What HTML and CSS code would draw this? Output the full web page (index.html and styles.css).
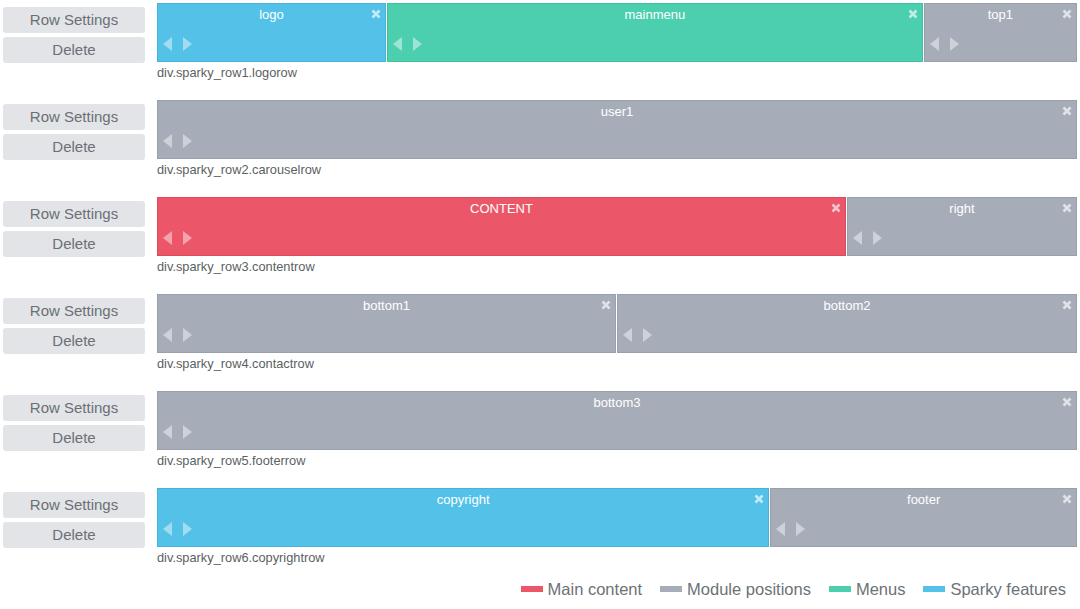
FILE: index.html
```html
<!DOCTYPE html>
<html>
    <head>
        <title>Layout Builder</title>
        <link rel="stylesheet" href="styles.css">
    </head>
    <body>
        <div class="layout">

            <div class="row">
                <div class="row-actions">
                    <div class="btn">Row Settings</div>
                    <div class="btn">Delete</div>
                </div>
                <div class="row-main">
                    <div class="positions">
                        <div class="pos feature span3">
                            <div class="pos-title">logo</div>
                            <svg class="close" viewBox="0 0 10 10"><path d="M1.5 1.5L8.5 8.5M8.5 1.5L1.5 8.5"/></svg>
                            <div class="arrows"><span class="arr-l"></span><span class="arr-r"></span></div>
                        </div>
                        <div class="pos menu span7">
                            <div class="pos-title">mainmenu</div>
                            <svg class="close" viewBox="0 0 10 10"><path d="M1.5 1.5L8.5 8.5M8.5 1.5L1.5 8.5"/></svg>
                            <div class="arrows"><span class="arr-l"></span><span class="arr-r"></span></div>
                        </div>
                        <div class="pos module span2">
                            <div class="pos-title">top1</div>
                            <svg class="close" viewBox="0 0 10 10"><path d="M1.5 1.5L8.5 8.5M8.5 1.5L1.5 8.5"/></svg>
                            <div class="arrows"><span class="arr-l"></span><span class="arr-r"></span></div>
                        </div>
                    </div>
                    <div class="row-name">div.sparky_row1.logorow</div>
                </div>
            </div>

            <div class="row">
                <div class="row-actions">
                    <div class="btn">Row Settings</div>
                    <div class="btn">Delete</div>
                </div>
                <div class="row-main">
                    <div class="positions">
                        <div class="pos module span12">
                            <div class="pos-title">user1</div>
                            <svg class="close" viewBox="0 0 10 10"><path d="M1.5 1.5L8.5 8.5M8.5 1.5L1.5 8.5"/></svg>
                            <div class="arrows"><span class="arr-l"></span><span class="arr-r"></span></div>
                        </div>
                    </div>
                    <div class="row-name">div.sparky_row2.carouselrow</div>
                </div>
            </div>

            <div class="row">
                <div class="row-actions">
                    <div class="btn">Row Settings</div>
                    <div class="btn">Delete</div>
                </div>
                <div class="row-main">
                    <div class="positions">
                        <div class="pos content span9">
                            <div class="pos-title">CONTENT</div>
                            <svg class="close" viewBox="0 0 10 10"><path d="M1.5 1.5L8.5 8.5M8.5 1.5L1.5 8.5"/></svg>
                            <div class="arrows"><span class="arr-l"></span><span class="arr-r"></span></div>
                        </div>
                        <div class="pos module span3">
                            <div class="pos-title">right</div>
                            <svg class="close" viewBox="0 0 10 10"><path d="M1.5 1.5L8.5 8.5M8.5 1.5L1.5 8.5"/></svg>
                            <div class="arrows"><span class="arr-l"></span><span class="arr-r"></span></div>
                        </div>
                    </div>
                    <div class="row-name">div.sparky_row3.contentrow</div>
                </div>
            </div>

            <div class="row">
                <div class="row-actions">
                    <div class="btn">Row Settings</div>
                    <div class="btn">Delete</div>
                </div>
                <div class="row-main">
                    <div class="positions">
                        <div class="pos module span6">
                            <div class="pos-title">bottom1</div>
                            <svg class="close" viewBox="0 0 10 10"><path d="M1.5 1.5L8.5 8.5M8.5 1.5L1.5 8.5"/></svg>
                            <div class="arrows"><span class="arr-l"></span><span class="arr-r"></span></div>
                        </div>
                        <div class="pos module span6">
                            <div class="pos-title">bottom2</div>
                            <svg class="close" viewBox="0 0 10 10"><path d="M1.5 1.5L8.5 8.5M8.5 1.5L1.5 8.5"/></svg>
                            <div class="arrows"><span class="arr-l"></span><span class="arr-r"></span></div>
                        </div>
                    </div>
                    <div class="row-name">div.sparky_row4.contactrow</div>
                </div>
            </div>

            <div class="row">
                <div class="row-actions">
                    <div class="btn">Row Settings</div>
                    <div class="btn">Delete</div>
                </div>
                <div class="row-main">
                    <div class="positions">
                        <div class="pos module span12">
                            <div class="pos-title">bottom3</div>
                            <svg class="close" viewBox="0 0 10 10"><path d="M1.5 1.5L8.5 8.5M8.5 1.5L1.5 8.5"/></svg>
                            <div class="arrows"><span class="arr-l"></span><span class="arr-r"></span></div>
                        </div>
                    </div>
                    <div class="row-name">div.sparky_row5.footerrow</div>
                </div>
            </div>

            <div class="row">
                <div class="row-actions">
                    <div class="btn">Row Settings</div>
                    <div class="btn">Delete</div>
                </div>
                <div class="row-main">
                    <div class="positions">
                        <div class="pos feature span8">
                            <div class="pos-title">copyright</div>
                            <svg class="close" viewBox="0 0 10 10"><path d="M1.5 1.5L8.5 8.5M8.5 1.5L1.5 8.5"/></svg>
                            <div class="arrows"><span class="arr-l"></span><span class="arr-r"></span></div>
                        </div>
                        <div class="pos module span4">
                            <div class="pos-title">footer</div>
                            <svg class="close" viewBox="0 0 10 10"><path d="M1.5 1.5L8.5 8.5M8.5 1.5L1.5 8.5"/></svg>
                            <div class="arrows"><span class="arr-l"></span><span class="arr-r"></span></div>
                        </div>
                    </div>
                    <div class="row-name">div.sparky_row6.copyrightrow</div>
                </div>
            </div>

        </div>

        <div class="legend">
            <span class="legend-item"><span class="swatch content"></span>Main content</span>
            <span class="legend-item"><span class="swatch module"></span>Module positions</span>
            <span class="legend-item"><span class="swatch menu"></span>Menus</span>
            <span class="legend-item"><span class="swatch feature"></span>Sparky features</span>
        </div>
    </body>
</html>
```

FILE: styles.css
```css
body {
    margin: 0;
    padding: 3px 3px 0 3px;
    font-family: "Liberation Sans", Arial, sans-serif;
    background: #fff;
}

.row {
    display: flex;
    gap: 12px;
    margin-bottom: 19px;
}

.row-actions {
    width: 142px;
    flex: none;
    padding-top: 4px;
    display: flex;
    flex-direction: column;
    gap: 4px;
}

.btn {
    height: 26px;
    line-height: 26px;
    text-align: center;
    background-color: #e2e4e8;
    color: #6c7075;
    border-radius: 3px;
    font-size: 15px;
}

.row-main {
    flex: 1;
    min-width: 0;
}

/* 12 column grid like bootstrap spans */
.positions {
    display: grid;
    grid-template-columns: repeat(12, 1fr);
    height: 59px;
}

.pos {
    position: relative;
    box-sizing: border-box;
    border: 1px solid;
    color: #fff;
    margin-right: 1px;
}

.pos:last-child {
    margin-right: 0;
}

.span2 { grid-column: span 2; }
.span3 { grid-column: span 3; }
.span4 { grid-column: span 4; }
.span6 { grid-column: span 6; }
.span7 { grid-column: span 7; }
.span8 { grid-column: span 8; }
.span9 { grid-column: span 9; }
.span12 { grid-column: span 12; }

.feature { background-color: #54c2e8; border-color: #46b3d9; }
.menu { background-color: #4ccfae; border-color: #3fc09f; }
.module { background-color: #a6adb8; border-color: #98a0ac; }
.content { background-color: #eb5768; border-color: #dd4a5b; }

.pos-title {
    text-align: center;
    font-size: 13px;
    padding-top: 3px;
    line-height: 16px;
}

.close {
    position: absolute;
    top: 5px;
    right: 4px;
    width: 10px;
    height: 10px;
    stroke: rgba(255, 255, 255, 0.65);
    stroke-width: 2.6;
    fill: none;
}

.arrows {
    position: absolute;
    left: 5px;
    top: 33px;
    display: flex;
    gap: 11px;
}

.arr-l, .arr-r {
    width: 0;
    height: 0;
    border-top: 7.5px solid transparent;
    border-bottom: 7.5px solid transparent;
}

.arr-l { border-right: 9px solid rgba(255, 255, 255, 0.45); }
.arr-r { border-left: 9px solid rgba(255, 255, 255, 0.45); }

.row-name {
    margin-top: 3px;
    font-size: 12.8px;
    line-height: 16px;
    color: #5b5f63;
}

.legend {
    margin-top: -7px;
    display: flex;
    justify-content: flex-end;
    gap: 18px;
    padding-right: 11px;
    font-size: 16.5px;
    line-height: 22px;
    color: #6c7277;
}

.legend-item {
    display: flex;
    align-items: center;
}

.swatch {
    width: 22px;
    height: 6px;
    margin-right: 5px;
}
```
